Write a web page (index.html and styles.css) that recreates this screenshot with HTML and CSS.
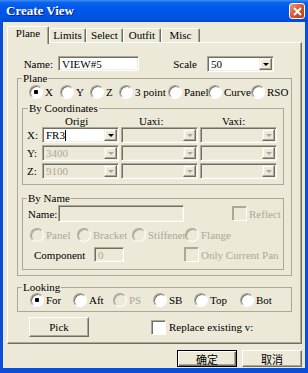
FILE: index.html
```html
<!DOCTYPE html>
<html lang="en">
<head>
  <meta charset="UTF-8">
  <title>Create View</title>
  <link rel="stylesheet" href="styles.css">
</head>
<body>
  <div class="window">
    <div class="titlebar">
      <span class="title">Create View</span>
      <span class="close">
        <svg width="9" height="9" viewBox="0 0 9 9"><path d="M1 1l7 7M8 1l-7 7" stroke="#fff" stroke-width="2"/></svg>
      </span>
    </div>
    <div class="client">
      <div class="tabs">
        <div class="tab active">Plane</div>
        <div class="tab t-limits">Limits</div>
        <div class="tab t-select">Select</div>
        <div class="tab t-outfit">Outfit</div>
        <div class="tab t-misc">Misc</div>
      </div>
      <div class="panel">
        <div class="name-row">
          <span class="name-lbl">Name:</span>
          <div class="field name-field">VIEW#5</div>
          <span class="scale-lbl">Scale</span>
          <div class="combo scale-combo"><span class="val">50</span><span class="drop"></span></div>
        </div>

        <fieldset class="group plane">
          <legend>Plane</legend>
          <div class="radios plane-radios">
            <span class="radio checked">X</span>
            <span class="radio">Y</span>
            <span class="radio">Z</span>
            <span class="radio">3 point</span>
            <span class="radio">Panel</span>
            <span class="radio">Curve</span>
            <span class="radio">RSO</span>
          </div>

          <fieldset class="group coords">
            <legend>By Coordinates</legend>
            <div class="coord-grid">
              <span></span>
              <span class="hdr hdr-o">Origi</span>
              <span class="hdr hdr-u">Uaxi:</span>
              <span class="hdr hdr-v">Vaxi:</span>

              <span class="rowlbl">X:</span>
              <div class="combo"><span class="val">FR3<i class="caret"></i></span><span class="drop"></span></div>
              <div class="combo off"><span class="val"></span><span class="drop"></span></div>
              <div class="combo off"><span class="val"></span><span class="drop"></span></div>

              <span class="rowlbl">Y:</span>
              <div class="combo off"><span class="val">3400</span><span class="drop"></span></div>
              <div class="combo off"><span class="val"></span><span class="drop"></span></div>
              <div class="combo off"><span class="val"></span><span class="drop"></span></div>

              <span class="rowlbl">Z:</span>
              <div class="combo off"><span class="val">9100</span><span class="drop"></span></div>
              <div class="combo off"><span class="val"></span><span class="drop"></span></div>
              <div class="combo off"><span class="val"></span><span class="drop"></span></div>
            </div>
          </fieldset>

          <fieldset class="group byname">
            <legend>By Name</legend>
            <div class="byname-row">
              <span class="bn-lbl">Name:</span>
              <div class="field off bn-field"></div>
              <span class="check off reflect">Reflect</span>
            </div>
            <div class="radios byname-radios">
              <span class="radio off">Panel</span>
              <span class="radio off">Bracket</span>
              <span class="radio off">Stiffener</span>
              <span class="radio off">Flange</span>
            </div>
            <div class="comp-row">
              <span class="comp-lbl">Component</span>
              <div class="field off comp-field">0</div>
              <span class="check off only">Only Current Pan</span>
            </div>
          </fieldset>
        </fieldset>

        <fieldset class="group looking">
          <legend>Looking</legend>
          <div class="radios looking-radios">
            <span class="radio checked">For</span>
            <span class="radio">Aft</span>
            <span class="radio off">PS</span>
            <span class="radio">SB</span>
            <span class="radio">Top</span>
            <span class="radio">Bot</span>
          </div>
        </fieldset>

        <div class="pick-row">
          <div class="btn pick">Pick</div>
          <span class="check replace">Replace existing v:</span>
        </div>
      </div>

      <div class="buttons">
        <div class="btn cjk default">确定</div>
        <div class="btn cjk">取消</div>
      </div>
    </div>
  </div>
</body>
</html>
```

FILE: styles.css
```css
* {
  box-sizing: border-box;
}
body {
  margin: 0;
  font: 11px/12px "Liberation Serif", "Noto Sans CJK SC", serif;
  color: #000;
}
.window {
  width: 308px;
  height: 373px;
  background: #0a4edb;
  padding-bottom: 5px;
}
.titlebar {
  height: 22px;
  display: flex;
  align-items: center;
  justify-content: space-between;
  padding: 0 3px 0 6px;
  background: linear-gradient(#3d8ef7 0, #0a63e8 12%, #0058ee 35%, #0054e6 75%, #0049d2 100%);
}
.title {
  color: #fff;
  font: bold 13px/14px "Liberation Serif", serif;
  text-shadow: 1px 1px 0 #0a1f66;
}
.close {
  width: 16px;
  height: 16px;
  border: 1px solid #fff;
  border-radius: 3px;
  background: linear-gradient(135deg, #ec9c7a, #d4532c 55%, #c03c18);
  display: flex;
  align-items: center;
  justify-content: center;
}
.client {
  height: 346px;
  margin: 0 3px;
  background: #ece9d8;
}

/* tabs */
.tabs {
  display: flex;
  align-items: flex-end;
  height: 20px;
  padding: 4px 0 0 4px;
}
.tab {
  height: 14px;
  border: 1px solid;
  border-bottom: 0;
  border-color: #fff #716f64 transparent #fff;
  border-radius: 2px 2px 0 0;
  box-shadow: inset -1px 0 0 #aca899;
  background: #ece9d8;
  text-align: center;
  white-space: nowrap;
}
.tab.active {
  width: 42px;
  height: 18px;
  margin-bottom: -2px;
  position: relative;
  z-index: 1;
}
.t-limits { width: 37px; }
.t-select { width: 37px; }
.t-outfit { width: 38px; }
.t-misc { width: 39px; }

.panel {
  width: 295px;
  height: 302px;
  margin-left: 4px;
  border: 1px solid;
  border-color: #fff #716f64 #716f64 #fff;
  box-shadow: inset -1px -1px 0 #aca899;
}

/* name row */
.name-row {
  display: flex;
  align-items: center;
  height: 17px;
  margin-top: 12px;
}
.name-lbl {
  width: 45px;
  text-align: right;
}
.name-field {
  width: 81px;
  height: 15px;
  margin-left: 5px;
}
.scale-lbl {
  width: 58px;
  text-align: right;
}
.scale-combo {
  width: 67px;
  height: 17px;
  margin-left: 10px;
}

/* controls */
.field {
  border: 1px solid;
  border-color: #aca899 #fff #fff #aca899;
  box-shadow: inset 1px 1px 0 #716f64, inset -1px -1px 0 #f1efe2;
  background: #fff;
  padding: 1px 3px;
  line-height: 12px;
  white-space: nowrap;
}
.field.off {
  background: #ece9d8;
  color: #aca899;
}
.combo {
  display: flex;
  height: 16px;
  border: 1px solid;
  border-color: #aca899 #fff #fff #aca899;
  box-shadow: inset 1px 1px 0 #716f64, inset -1px -1px 0 #f1efe2;
  background: #fff;
  padding: 1px;
}
.combo .val {
  flex: 1;
  padding-left: 2px;
  line-height: 12px;
  white-space: nowrap;
  overflow: hidden;
}
.combo .drop {
  width: 13px;
  border: 1px solid;
  border-color: #f1efe2 #716f64 #716f64 #f1efe2;
  box-shadow: inset -1px -1px 0 #aca899, inset 1px 1px 0 #fff;
  background: #ece9d8;
  display: flex;
  align-items: center;
  justify-content: center;
}
.combo .drop::after {
  content: "";
  border-left: 3px solid transparent;
  border-right: 3px solid transparent;
  border-top: 3px solid #000;
  margin-top: 1px;
}
.combo.off {
  background: #ece9d8;
  color: #aca899;
}
.combo.off .drop::after {
  border-top-color: #aca899;
}
.caret {
  display: inline-block;
  width: 1px;
  height: 11px;
  background: #000;
  vertical-align: -2px;
}

.radios {
  display: flex;
  align-items: center;
  height: 12px;
}
.radio {
  display: flex;
  align-items: center;
  gap: 2px;
  white-space: nowrap;
  flex: none;
}
.radio::before {
  content: "";
  flex: none;
  width: 12px;
  height: 12px;
  border-radius: 50%;
  border: 1px solid;
  border-color: #aca899 #fff #fff #aca899;
  box-shadow: inset 1px 1px 0 #716f64;
  background: #fff;
}
.radio.checked::before {
  background: radial-gradient(circle, #000 0 2px, #fff 2.5px);
}
.radio.off {
  color: #aca899;
}
.radio.off::before {
  background: #ece9d8;
  box-shadow: inset 1px 1px 0 #aca899;
}

.check {
  display: flex;
  align-items: center;
  gap: 2px;
  white-space: nowrap;
}
.check::before {
  content: "";
  flex: none;
  width: 13px;
  height: 13px;
  border: 1px solid;
  border-color: #aca899 #fff #fff #aca899;
  box-shadow: inset 1px 1px 0 #716f64;
  background: #fff;
}
.check.off {
  color: #aca899;
}
.check.off::before {
  background: #ece9d8;
  box-shadow: inset 1px 1px 0 #aca899;
}

/* group boxes */
.group {
  margin: 0;
  padding: 0;
  min-inline-size: 0;
  border: 1px solid #aca899;
}
.group legend {
  padding: 0 1px;
  margin-left: 4px;
  line-height: 12px;
}
.plane {
  width: 275px;
  margin-left: 9px;
  padding-bottom: 5px;
}
.plane-radios {
  margin-top: 2px;
  padding-left: 11px;
}
.plane-radios .radio:nth-child(1) { width: 31px; }
.plane-radios .radio:nth-child(2) { width: 30px; }
.plane-radios .radio:nth-child(3) { width: 29px; }
.plane-radios .radio:nth-child(4) { width: 49px; }
.plane-radios .radio:nth-child(5) { width: 40px; }
.plane-radios .radio:nth-child(6) { width: 43px; }

.coords {
  width: 262px;
  margin: 4px 0 0 4px;
  padding-bottom: 5px;
}
.coords legend {
  margin-left: 5px;
}
.coord-grid {
  display: grid;
  grid-template-columns: 17px 77px 77px 77px;
  grid-template-rows: 11px 16px 16px 16px;
  gap: 2px;
}
.hdr {
  line-height: 14px;
  white-space: nowrap;
}
.hdr-o { padding-left: 23px; }
.hdr-u { padding-left: 18px; }
.hdr-v { padding-left: 22px; }
.rowlbl {
  padding-left: 4px;
  line-height: 16px;
}

.byname {
  width: 262px;
  margin: 7px 0 0 4px;
  padding-bottom: 7px;
}
.byname-row {
  display: flex;
  align-items: center;
  height: 17px;
  margin-top: 1px;
  padding-left: 5px;
}
.bn-lbl {
  width: 30px;
}
.bn-field {
  width: 126px;
  height: 17px;
}
.reflect {
  margin-left: 48px;
}
.byname-radios {
  margin-top: 7px;
  padding-left: 7px;
}
.byname-radios .radio:nth-child(1) { width: 47px; }
.byname-radios .radio:nth-child(2) { width: 55px; }
.byname-radios .radio:nth-child(3) { width: 53px; overflow: hidden; }
.comp-row {
  display: flex;
  align-items: center;
  height: 15px;
  margin-top: 6px;
  padding-left: 11px;
}
.comp-lbl {
  width: 60px;
}
.comp-field {
  width: 30px;
  height: 15px;
}
.only {
  margin-left: 60px;
}

.looking {
  width: 275px;
  margin: 5px 0 0 9px;
  padding-bottom: 5px;
}
.looking-radios {
  margin-top: 1px;
  padding-left: 12px;
}
.looking-radios .radio:nth-child(1) { width: 43px; }
.looking-radios .radio:nth-child(2) { width: 40px; }
.looking-radios .radio:nth-child(3) { width: 40px; }
.looking-radios .radio:nth-child(4) { width: 41px; }
.looking-radios .radio:nth-child(5) { width: 46px; }

/* buttons */
.btn {
  width: 60px;
  border: 1px solid;
  border-color: #fff #716f64 #716f64 #fff;
  box-shadow: inset -1px -1px 0 #aca899;
  background: #ece9d8;
  display: flex;
  align-items: center;
  justify-content: center;
}
.pick-row {
  display: flex;
  align-items: center;
  height: 20px;
  margin-top: 5px;
}
.pick {
  height: 20px;
  margin-left: 21px;
}
.replace {
  margin-left: 62px;
  gap: 3px;
}
.buttons {
  display: flex;
  justify-content: flex-end;
  gap: 5px;
  margin-top: 6px;
  padding-right: 3px;
}
.buttons .btn {
  height: 17px;
}
.cjk {
  font: 11px/12px "Noto Sans CJK SC", sans-serif;
}
.btn.default {
  border-color: #000;
  box-shadow: inset 1px 1px 0 #fff, inset -1px -1px 0 #716f64, inset -2px -2px 0 #aca899;
}
```
